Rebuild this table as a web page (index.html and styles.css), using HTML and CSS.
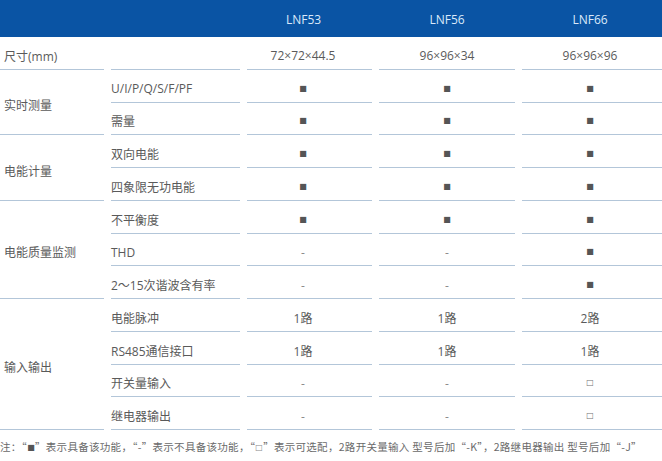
FILE: index.html
```html
<!DOCTYPE html>
<html lang="zh">
<head>
<meta charset="utf-8">
<title>LNF 系列</title>
<link rel="stylesheet" href="styles.css">
</head>
<body>
<div class="spec">
  <div class="head grid">
    <div class="h c3">LNF53</div>
    <div class="h c4">LNF56</div>
    <div class="h c5">LNF66</div>
  </div>
  <div class="body grid">
    <div class="cell lab">尺寸(mm)</div>
    <div class="cell item"></div>
    <div class="cell val c3">72×72×44.5</div>
    <div class="cell val">96×96×34</div>
    <div class="cell val c5">96×96×96</div>

    <div class="cell lab span2">实时测量</div>
    <div class="cell item">U/I/P/Q/S/F/PF</div>
    <div class="cell val c3"><span class="sym">■</span></div>
    <div class="cell val"><span class="sym">■</span></div>
    <div class="cell val c5"><span class="sym">■</span></div>
    <div class="cell item">需量</div>
    <div class="cell val c3"><span class="sym">■</span></div>
    <div class="cell val"><span class="sym">■</span></div>
    <div class="cell val c5"><span class="sym">■</span></div>

    <div class="cell lab span2">电能计量</div>
    <div class="cell item">双向电能</div>
    <div class="cell val c3"><span class="sym">■</span></div>
    <div class="cell val"><span class="sym">■</span></div>
    <div class="cell val c5"><span class="sym">■</span></div>
    <div class="cell item">四象限无功电能</div>
    <div class="cell val c3"><span class="sym">■</span></div>
    <div class="cell val"><span class="sym">■</span></div>
    <div class="cell val c5"><span class="sym">■</span></div>

    <div class="cell lab span3">电能质量监测</div>
    <div class="cell item">不平衡度</div>
    <div class="cell val c3"><span class="sym">■</span></div>
    <div class="cell val"><span class="sym">■</span></div>
    <div class="cell val c5"><span class="sym">■</span></div>
    <div class="cell item">THD</div>
    <div class="cell val c3"><span class="no">-</span></div>
    <div class="cell val"><span class="no">-</span></div>
    <div class="cell val c5"><span class="sym">■</span></div>
    <div class="cell item">2～15次谐波含有率</div>
    <div class="cell val c3"><span class="no">-</span></div>
    <div class="cell val"><span class="no">-</span></div>
    <div class="cell val c5"><span class="sym">■</span></div>

    <div class="cell lab span4">输入输出</div>
    <div class="cell item">电能脉冲</div>
    <div class="cell val c3">1路</div>
    <div class="cell val">1路</div>
    <div class="cell val c5">2路</div>
    <div class="cell item">RS485通信接口</div>
    <div class="cell val c3">1路</div>
    <div class="cell val">1路</div>
    <div class="cell val c5">1路</div>
    <div class="cell item">开关量输入</div>
    <div class="cell val c3"><span class="no">-</span></div>
    <div class="cell val"><span class="no">-</span></div>
    <div class="cell val c5"><span class="sym opt">□</span></div>
    <div class="cell item">继电器输出</div>
    <div class="cell val c3"><span class="no">-</span></div>
    <div class="cell val"><span class="no">-</span></div>
    <div class="cell val c5"><span class="sym opt">□</span></div>
  </div>
  <p class="note">注：“<span class="nsym">■</span>”表示具备该功能，“-”表示不具备该功能，“<span class="nsym opt">□</span>”表示可选配，2路开关量输入 型号后加“-K”，2路继电器输出 型号后加“-J”</p>
</div>
</body>
</html>
```

FILE: styles.css
```css
html, body {
  margin: 0;
  padding: 0;
  background: #ffffff;
}

body {
  width: 662px;
  height: 461px;
  overflow: hidden;
  font-family: "Open Sans", "Noto Sans CJK SC", sans-serif;
  font-size: 12px;
  color: #5a5a5a;
}

.grid {
  display: grid;
  grid-template-columns: 104px 129px 125px 136px 1fr;
  column-gap: 7px;
}

.head {
  height: 37px;
  background: #0a54a4;
  align-items: center;
}

.h {
  color: #dbe9fa;
  font-size: 12px;
  text-align: center;
  padding-top: 1px;
}

.head .c3 { grid-column: 3; padding-right: 12px; }
.head .c4 { grid-column: 4; }
.head .c5 { grid-column: 5; padding-right: 4px; }

.body {
  grid-auto-rows: 32.75px;
}

.cell {
  display: flex;
  align-items: center;
  border-bottom: 1px solid #b3c6d9;
  padding-top: 6px;
  box-sizing: border-box;
  white-space: nowrap;
}

.lab {
  grid-column: 1;
  padding-left: 4px;
}

.span2 { grid-row: span 2; }
.span3 { grid-row: span 3; }
.span4 { grid-row: span 4; }

.item {
  grid-column: 2;
}

.val {
  justify-content: center;
}

.val.c3 { padding-right: 13px; }
.val.c5 { padding-right: 4px; }

.sym {
  font-family: "DejaVu Sans", sans-serif;
  font-size: 8px;
  line-height: 1;
  color: #555555;
}

.sym.opt {
  color: #707070;
}

.no {
  color: #8a8a8a;
}

.note {
  margin: 0;
  height: 31px;
  line-height: 33px;
  font-family: "Noto Sans CJK SC", "Open Sans", sans-serif;
  font-size: 10.5px;
  letter-spacing: 0.3px;
  color: #6a6a6a;
  white-space: nowrap;
}

.nsym {
  font-family: "DejaVu Sans", sans-serif;
  font-size: 8px;
  color: #555555;
  vertical-align: 1px;
}

.nsym.opt {
  color: #888888;
}
```
